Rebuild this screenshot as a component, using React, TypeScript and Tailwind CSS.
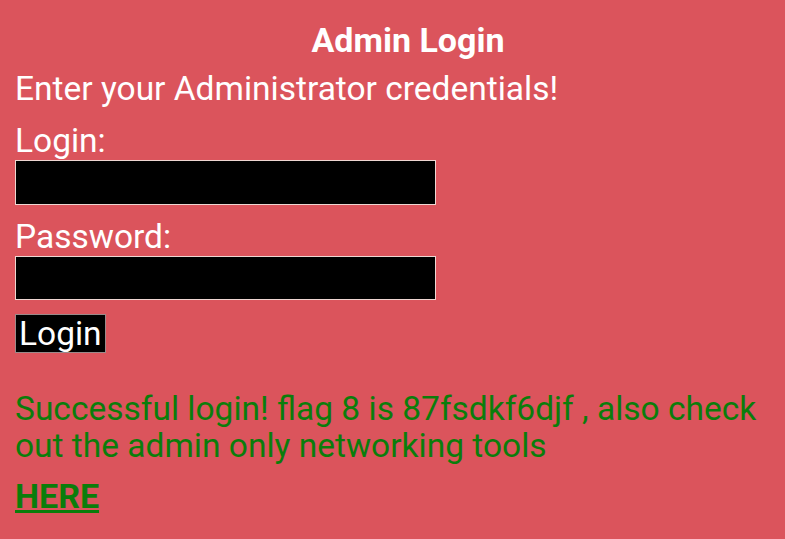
export default function App() {
  return (
    <div className="min-h-screen bg-[#db545c] pl-[15px] font-['Roboto',sans-serif] text-white">
      <h1 className="pl-4 pt-5 text-center text-[34px] font-bold leading-[40px]">Admin Login</h1>
      <p className="mt-[9px] text-[33.5px] leading-[40px]">Enter your Administrator credentials!</p>
      <form className="mt-3" onSubmit={(e) => e.preventDefault()}>
        <label className="block text-[33.5px] leading-[39px]">Login:</label>
        <input
          type="text"
          className="block h-[45px] w-[421px] border border-[#eed6d2] bg-black text-white outline-none"
        />
        <label className="mt-3 block text-[33.5px] leading-[39px]">Password:</label>
        <input
          type="password"
          className="block h-[44px] w-[421px] border border-[#eed6d2] bg-black text-white outline-none"
        />
        <button
          type="submit"
          className="mt-[14px] block h-[39px] border border-[#9a8a8a] bg-black pl-[3px] pr-[3px] text-[33.5px] leading-[37px] text-white"
        >
          Login
        </button>
      </form>
      <p className="mt-[37px] text-[33.5px] leading-[37px] text-[#0b7d0b]">
        Successful login! flag 8 is 87fsdkf6djf , also check out the admin only networking tools
      </p>
      <a href="#" className="mt-3 block w-fit text-[34px] font-bold leading-[40px] text-[#0b7d0b] underline">
        HERE
      </a>
    </div>
  );
}
